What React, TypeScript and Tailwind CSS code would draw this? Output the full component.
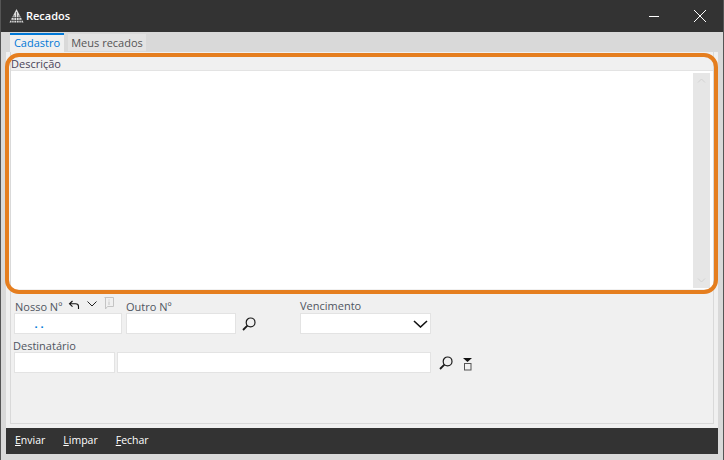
import React from 'react';

const font = { fontFamily: '"Open Sans", "Noto Sans", sans-serif' };

const SearchIcon = () => (
  <svg width="14" height="14" viewBox="0 0 14 14" fill="none" stroke="#1a1a1a">
    <circle cx="8.6" cy="5.4" r="4.4" strokeWidth="1.2" />
    <path d="M5.4 8.6 1 13" strokeWidth="1.8" />
  </svg>
);

const Logo = () => (
  <svg width="15" height="14" viewBox="0 0 15 14" fill="#dcdcdc">
    <path d="M7.5 0 14.5 13.5H.5Z" />
    <path d="M7.5 3v11M5 6v8M10 6v8M2.8 10v4M12.2 10v4M3 8.5h9M1.5 11.5h12" stroke="#333" strokeWidth="0.7" />
  </svg>
);

const Field = ({ className, children }: { className: string; children?: React.ReactNode }) => (
  <div className={`h-[21px] bg-white border border-[#e3e3e3] ${className}`}>{children}</div>
);

const FooterButton = ({ first, rest }: { first: string; rest: string }) => (
  <span className="text-[10.5px] font-medium text-white">
    <span className="underline">{first}</span>
    {rest}
  </span>
);

export default function App() {
  return (
    <div style={font} className="relative w-[724px] h-[460px] flex flex-col bg-[#d9d9d9] border-l border-r border-[#555] overflow-hidden">
      {/* title bar */}
      <div className="h-[32px] shrink-0 bg-[#333333] -mx-px flex items-center pl-[9px]">
        <Logo />
        <span className="ml-[2px] text-[11px] font-semibold text-white">Recados</span>
        <div className="ml-auto flex items-center">
          <div className="w-[10px] h-px bg-white mr-[35px]" />
          <svg width="12" height="12" viewBox="0 0 12 12" className="mr-[18px]" stroke="#ffffff" strokeWidth="1">
            <path d="M0 0 12 12M12 0 0 12" />
          </svg>
        </div>
      </div>

      {/* tabs */}
      <div className="h-[20px] shrink-0 flex items-end pl-[9px] gap-[4px] text-[11px]">
        <div className="w-[54px] h-[19px] bg-[#f0f0f0] border-t-2 border-[#0078d7] text-[#0078d7] text-center leading-[15px]">Cadastro</div>
        <div className="w-[78px] h-[17px] mb-px bg-[#e3e3e3] text-[#555] text-center leading-[17px]">Meus recados</div>
      </div>

      {/* panel */}
      <div className="mx-[5px] h-[376px] shrink-0 bg-[#f0f0f0] px-[4px] pb-[4px]">
        <div className="h-full border-r border-b border-l border-[#d9d9d9] flex flex-col">
          <div className="h-[18px] shrink-0 text-[11px] leading-[24px] text-[#4a4458]">Descrição</div>
          <div className="h-[219px] shrink-0 bg-white border-t border-[#e3e3e3] flex justify-end pr-[3px] pt-[2px] pb-[1px]">
            <div className="w-[17px] bg-[#e6e6e6] flex flex-col justify-between items-center py-[5px]">
              <svg width="9" height="5" viewBox="0 0 9 5" fill="none" stroke="#d2d2d2">
                <path d="M1 4.5 4.5 1 8 4.5" />
              </svg>
              <svg width="9" height="5" viewBox="0 0 9 5" fill="none" stroke="#d2d2d2">
                <path d="M1 .5 4.5 4 8 .5" />
              </svg>
            </div>
          </div>

          {/* form */}
          <div className="pl-[3px] pt-[9px] text-[11px] text-[#4f5560]">
            <div className="flex items-end">
              <div className="w-[112px] shrink-0">
                <div className="h-[15px] flex items-center pl-px translate-y-[1px]">
                  <span className="leading-[15px]">Nosso Nº</span>
                  <svg width="12" height="10" viewBox="0 0 12 10" fill="none" stroke="#111" className="ml-[6px] -mt-[3px]" strokeWidth="1.1">
                    <path d="M4.5 1 1.5 3.8 4.5 6.6M1.5 3.8H7.5Q10.5 3.8 10.5 6.5V9" />
                  </svg>
                  <svg width="10" height="6" viewBox="0 0 10 6" fill="none" stroke="#222" className="ml-[7px] -mt-[5px]">
                    <path d="M.5.5 5 5 9.5.5" />
                  </svg>
                  <svg width="10" height="13" viewBox="0 0 10 13" fill="none" stroke="#c4c4c4" className="ml-[7px] -mt-[6px]">
                    <path d="M.5.5H9.5V9.5H3.5L1.5 12V.5" />
                    <path d="M5 2.5V3.5M5 4.5V8" />
                  </svg>
                </div>
                <Field className="w-[108px] text-center text-[#0078d7] font-bold leading-[20px] pr-[58px]">. .</Field>
              </div>
              <div className="w-[110px] shrink-0">
                <div className="leading-[15px] translate-y-[1px]">Outro Nº</div>
                <Field className="w-[110px]" />
              </div>
              <div className="w-[64px] shrink-0 h-[21px] pl-[6px] pt-[4px]">
                <SearchIcon />
              </div>
              <div className="w-[131px] shrink-0">
                <div className="leading-[15px]">Vencimento</div>
                <Field className="w-[131px] flex items-center justify-end pr-[2px]">
                  <svg width="15" height="8" viewBox="0 0 15 8" fill="none" stroke="#111" strokeWidth="1.6">
                    <path d="M1 1 7.5 7 14 1" />
                  </svg>
                </Field>
              </div>
            </div>

            <div className="mt-[4px] -ml-px leading-[15px]">Destinatário</div>
            <div className="-mt-px flex items-center">
              <Field className="w-[101px] shrink-0" />
              <Field className="w-[314px] ml-[2px] shrink-0" />
              <div className="ml-[8px] flex items-center">
                <SearchIcon />
              </div>
              <svg width="9" height="13" viewBox="0 0 9 13" className="ml-[10px] mt-[4px]">
                <path d="M0 0H9L4.5 4Z" fill="#111" />
                <rect x="1.5" y="5.5" width="6.5" height="6.5" fill="none" stroke="#555" />
              </svg>
            </div>
          </div>
        </div>
      </div>

      {/* footer */}
      <div className="mx-[5px] h-[26px] shrink-0 bg-[#333333] flex items-center pl-[9px] gap-[18px]">
        <FooterButton first="E" rest="nviar" />
        <FooterButton first="L" rest="impar" />
        <FooterButton first="F" rest="echar" />
      </div>

      {/* orange highlight over the description */}
      <div className="absolute left-[4px] top-[53px] w-[713px] h-[241px] border-4 border-[#e57e1f] rounded-[14px] pointer-events-none" />
    </div>
  );
}
